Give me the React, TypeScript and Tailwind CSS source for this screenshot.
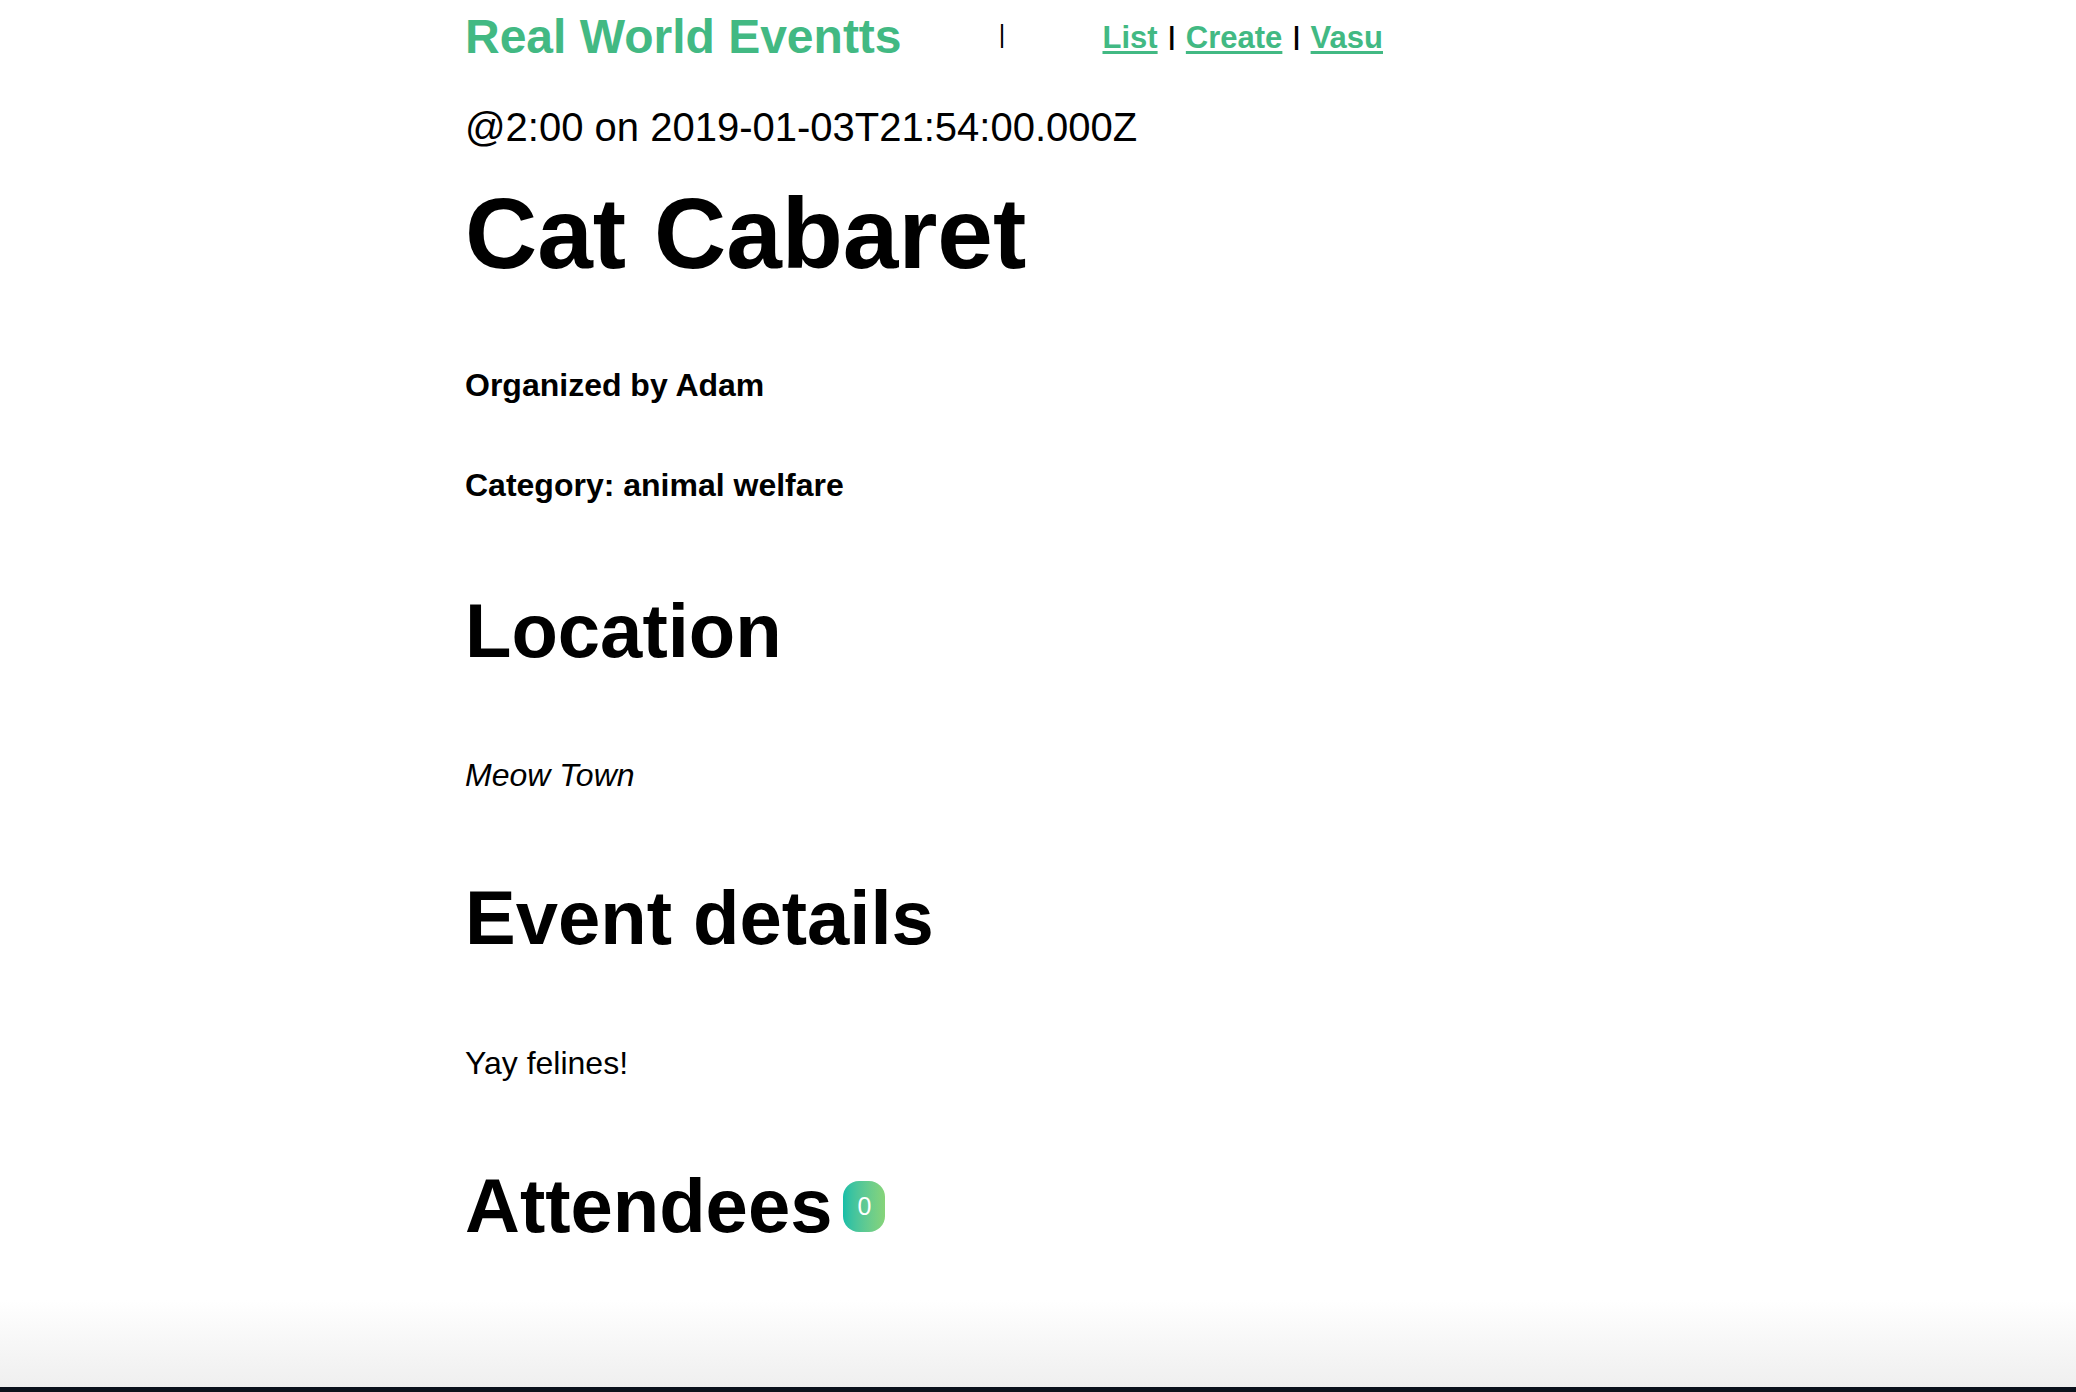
import React from "react";

const font = "font-['Liberation_Sans',Arial,Helvetica,sans-serif]";

const NavBar: React.FC = () => {
    return (
        <div className="flex w-[918px] items-start justify-between h-[73px]">
            <a href="#" className="text-[48px] font-bold leading-[73px] text-[#42b983] no-underline">
                Real World Eventts
            </a>
            <span className="text-[25px] leading-[68px] text-black">|</span>
            <nav className="text-[31px] font-bold leading-[72px] text-black">
                <a href="#" className="text-[#42b983] underline decoration-[3px] underline-offset-[3px]">List</a>{" "}
                <span className="px-[2px] text-[25px] align-[3px]">|</span>{" "}
                <a href="#" className="text-[#42b983] underline decoration-[3px] underline-offset-[3px]">Create</a>{" "}
                <span className="px-[2px] text-[25px] align-[3px]">|</span>{" "}
                <a href="#" className="text-[#42b983] underline decoration-[3px] underline-offset-[3px]">Vasu</a>
            </nav>
        </div>
    );
};

export default function App() {
    const attendees: string[] = [];

    return (
        <div className={`${font} flex h-screen flex-col bg-white text-black overflow-hidden`}>
            <div className="mx-auto w-[1146px]">
                <NavBar />

                {/* Event header */}
                <p className="mt-[30px] text-[40px] leading-[48px]">@2:00 on 2019-01-03T21:54:00.000Z</p>
                <h1 className="mt-[27px] text-[100px] font-bold leading-[110px]">Cat Cabaret</h1>
                <h5 className="mt-[77px] text-[32px] font-bold leading-[40px]">Organized by Adam</h5>
                <h5 className="mt-[60px] text-[32px] font-bold leading-[40px]">Category: animal welfare</h5>

                {/* Location */}
                <h2 className="mt-[83px] text-[76px] font-bold leading-[86px]">Location</h2>
                <address className="mt-[81px] text-[32px] italic leading-[40px]">Meow Town</address>

                {/* Details */}
                <h2 className="mt-[80px] text-[76px] font-bold leading-[86px]">Event details</h2>
                <p className="mt-[82px] text-[32px] leading-[40px]">Yay felines!</p>

                {/* Attendees */}
                <h2 className="mt-[80px] flex items-center gap-[11px] text-[76px] font-bold leading-[86px]">
                    Attendees
                    <span className="flex h-[51px] w-[42px] items-center justify-center rounded-[16px] bg-linear-to-r from-[#12bea8] to-[#86d479] text-[25px] font-normal leading-none text-white">
                        {attendees.length}
                    </span>
                </h2>
            </div>

            <div className="flex-1" />
            <div className="h-[87px] bg-linear-to-b from-white to-[#efefef]" />
            <div className="h-[5px] bg-[#0b111c]" />
        </div>
    );
}
